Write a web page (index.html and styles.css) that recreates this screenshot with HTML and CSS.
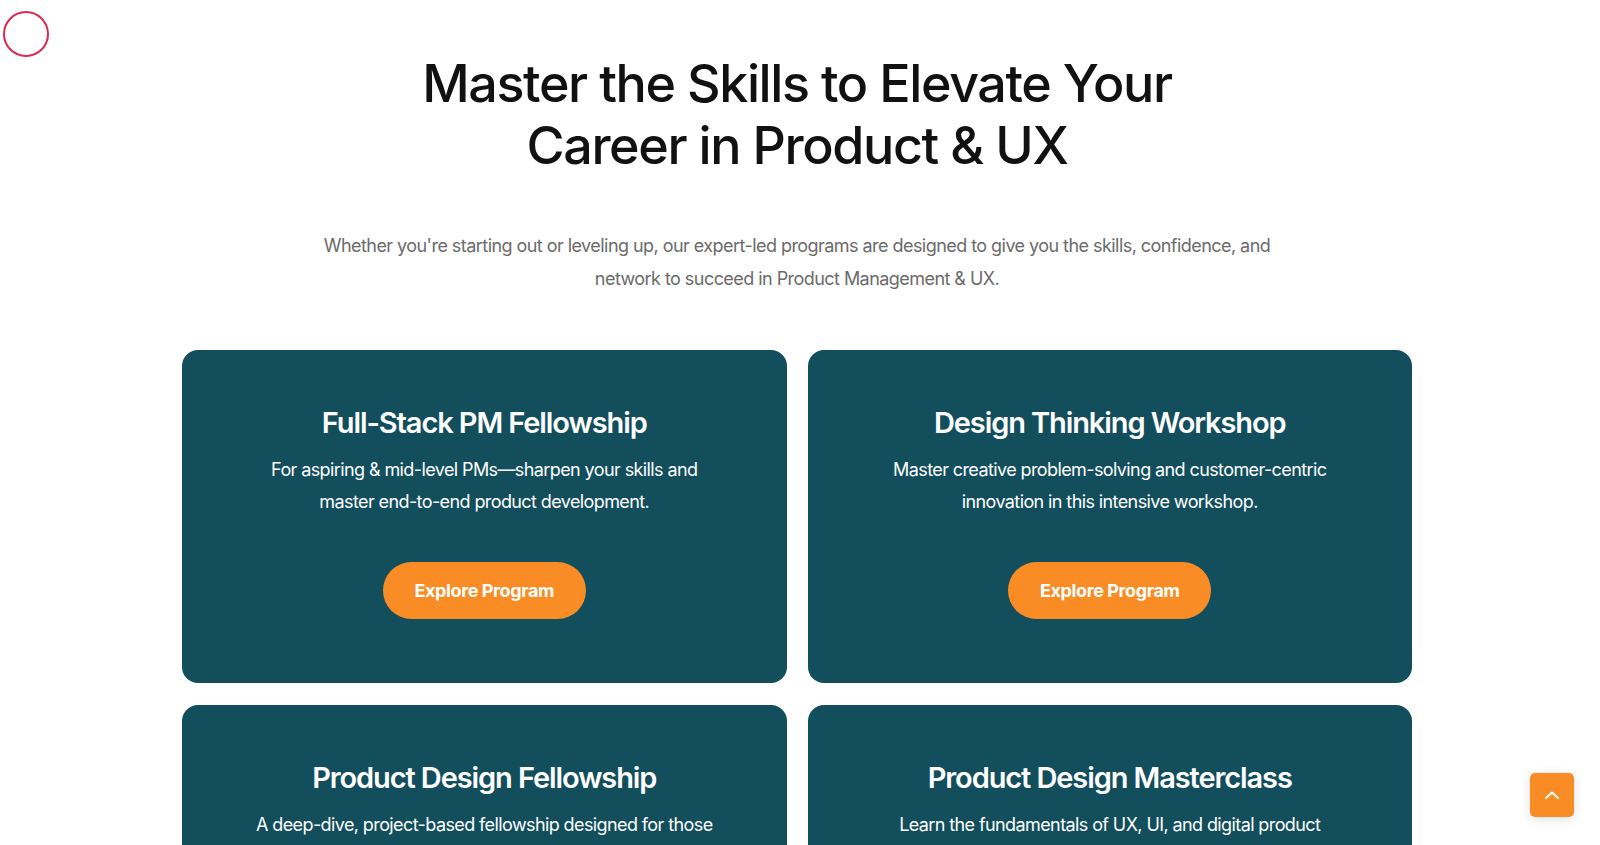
FILE: index.html
```html
<!DOCTYPE html>
<html lang="en">
<head>
  <meta charset="UTF-8">
  <title>Programs</title>
  <link rel="stylesheet" href="styles.css">
</head>
<body>
  <div class="cursor-ring"></div>

  <section class="programs">
    <h1 class="programs-title">Master the Skills to Elevate Your<br>Career in Product &amp; UX</h1>
    <p class="programs-intro">Whether you're starting out or leveling up, our expert-led programs are designed to give you the skills, confidence, and network to succeed in Product Management &amp; UX.</p>

    <div class="program-grid">
      <div class="program-card">
        <h2>Full-Stack PM Fellowship</h2>
        <p>For aspiring &amp; mid-level PMs—sharpen your skills and master end-to-end product development.</p>
        <a class="btn" href="#">Explore Program</a>
      </div>

      <div class="program-card">
        <h2>Design Thinking Workshop</h2>
        <p>Master creative problem-solving and customer-centric innovation in this intensive workshop.</p>
        <a class="btn" href="#">Explore Program</a>
      </div>

      <div class="program-card">
        <h2>Product Design Fellowship</h2>
        <p>A deep-dive, project-based fellowship designed for those ready to build a career in product design.</p>
        <a class="btn" href="#">Explore Program</a>
      </div>

      <div class="program-card">
        <h2>Product Design Masterclass</h2>
        <p>Learn the fundamentals of UX, UI, and digital product design from industry experts.</p>
        <a class="btn" href="#">Explore Program</a>
      </div>
    </div>
  </section>

  <a class="back-to-top" href="#" aria-label="Back to top">
    <svg width="14" height="8" viewBox="0 0 14 8" fill="none">
      <path d="M1 7L7 1.5L13 7" stroke="white" stroke-width="2" stroke-linecap="round" stroke-linejoin="round"/>
    </svg>
  </a>
</body>
</html>
```

FILE: styles.css
```css
body {
  margin: 0;
  padding: 0 6px 0 0;
  background-color: #ffffff;
  font-family: Inter, "Noto Sans", sans-serif;
  color: #111111;
}

.cursor-ring {
  position: fixed;
  top: 11px;
  left: 3px;
  width: 46px;
  height: 46px;
  box-sizing: border-box;
  border: 2px solid #d92a52;
  border-radius: 50%;
}

.programs {
  padding-top: 53px;
  display: flex;
  flex-direction: column;
  align-items: center;
}

.programs-title {
  margin: 0;
  font-size: 52px;
  line-height: 62px;
  font-weight: 500;
  letter-spacing: -1.4px;
  text-align: center;
  color: #111111;
}

.programs-intro {
  margin: 52px 0 0;
  max-width: 980px;
  font-size: 18px;
  line-height: 33px;
  color: #6b6b6b;
  text-align: center;
  letter-spacing: -0.55px;
}

.program-grid {
  margin-top: 55px;
  width: 100%;
  max-width: 1230px;
  display: grid;
  grid-template-columns: 1fr 1fr;
  gap: 22px 21px;
}

.program-card {
  background-color: #124e5c;
  border-radius: 16px;
  padding: 55px 64px 64px;
  display: flex;
  flex-direction: column;
  align-items: center;
  text-align: center;
  color: #ffffff;
}

.program-card h2 {
  margin: 0;
  font-size: 29px;
  line-height: 36px;
  font-weight: 600;
  letter-spacing: -1.1px;
}

.program-card p {
  margin: 13px 0 0;
  font-size: 18px;
  line-height: 32px;
  letter-spacing: -0.6px;
}

.btn {
  margin-top: 44px;
  display: inline-block;
  padding: 0 32px;
  height: 57px;
  line-height: 57px;
  border-radius: 29px;
  background-color: #f98c25;
  color: #ffffff;
  font-size: 18px;
  font-weight: 700;
  letter-spacing: -0.4px;
  text-decoration: none;
}

.back-to-top {
  position: fixed;
  right: 26px;
  bottom: 28px;
  width: 44px;
  height: 44px;
  border-radius: 5px;
  background-color: #f98c25;
  box-shadow: 0 2px 12px rgba(0, 0, 0, 0.12);
  display: flex;
  align-items: center;
  justify-content: center;
}
```
